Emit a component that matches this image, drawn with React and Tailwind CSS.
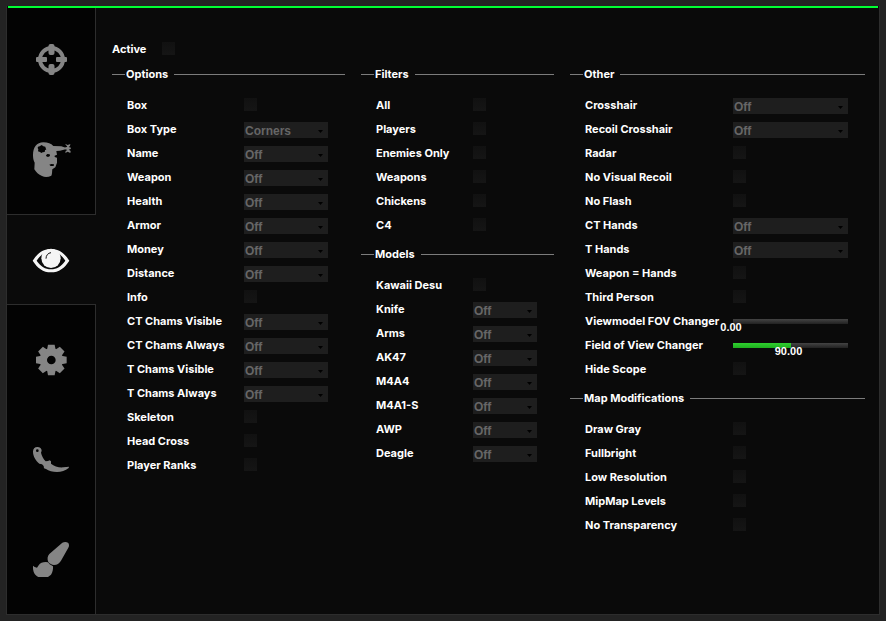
import React, { useState } from "react";

function Crosshair() {
  return (
    <svg className="size-12" viewBox="0 0 48 48" fill="currentColor" aria-hidden="true">
      <circle cx="24.5" cy="24.5" r="11.5" fill="none" stroke="currentColor" strokeWidth="4" />
      <rect x="21.5" y="9" width="6" height="11" rx="2" />
      <rect x="21.5" y="29" width="6" height="11" rx="2" />
      <rect x="9" y="22" width="11" height="5" rx="1" />
      <rect x="29" y="22" width="11" height="5" rx="1" />
    </svg>
  );
}

function Headshot() {
  return (
    <svg className="size-12" viewBox="21 15 144 144" fill="currentColor" aria-hidden="true">
      <path
        fillRule="evenodd"
        d="M39 75C39 52 50 37 70 37C84 37 93 41 100 48L124 49L137 53L137 58L120 62L109 63L111 74L104 77L104 81L111 83L111 98L106 112L97 118C96 124 97 132 94 137C84 142 74 142 66 138C56 134 48 127 43 118L44 98C40 90 39 84 39 75Z
        M54 50L59 49L65 45L70 49L76 50L77 55L79 58L75 61L74 66L68 67L64 69L60 66L54 64L55 58L53 54Z
        M78 76L82 72L89 73L90 78L84 81L79 79Z M88 104L94 102L102 103L101 108L92 108Z"
      />
      <path d="M135 41L143 45L151 42L150 48L146 51L153 53L152 57L146 59L152 63L151 69L143 65L136 69L137 63L142 60L134 57L134 53L142 50Z" />
    </svg>
  );
}

function Eye() {
  return (
    <svg className="size-12" viewBox="81 108 144 144" aria-hidden="true">
      <path
        fill="currentColor"
        fillRule="evenodd"
        d="M98 182C112 160 129 147 153 147C177 147 194 160 208 182C194 204 177 217 153 217C129 217 112 204 98 182Z
        M110 182C122 199 136 208 153 208C170 208 184 199 196 182C190 173 183 165 175 160L131 160C123 165 116 173 110 182Z"
      />
      <circle cx="153" cy="175" r="29" fill="currentColor" />
      <path d="M138 176C138 166 144 159 153 158" fill="none" stroke="#111" strokeWidth="3" />
    </svg>
  );
}

const TEETH = [0, 45, 90, 135, 180, 225, 270, 315];

function Gear() {
  return (
    <svg className="size-12" viewBox="81 408 144 144" fill="currentColor" aria-hidden="true">
      <circle cx="154" cy="480" r="24" fill="none" stroke="currentColor" strokeWidth="22" />
      {TEETH.map((angle) => (
        <path key={angle} d="M141 450L144 434L164 434L167 450Z" transform={`rotate(${angle} 154 480)`} />
      ))}
    </svg>
  );
}

function Knife() {
  return (
    <svg className="size-12" viewBox="81 48 144 144" fill="currentColor" aria-hidden="true">
      <path
        fillRule="evenodd"
        d="M99 95C99 86 104 81 112 81C120 81 125 86 125 92L123 98C125 107 130 117 137 124L144 123L149 121L153 124L153 131C162 139 176 143 190 142L207 140L206 144C196 152 184 156 171 156C158 156 146 153 138 147L132 145L131 138L126 133L118 131C107 122 99 108 99 95Z
        M108 92A4 4 0 1 0 116 92A4 4 0 1 0 108 92Z"
      />
    </svg>
  );
}

function Brush() {
  return (
    <svg className="size-12" viewBox="81 348 144 144" fill="currentColor" aria-hidden="true">
      <path d="M187 368C192 365 200 365 204 368C208 372 208 378 205 383L183 422C178 430 171 435 162 435C155 435 149 431 145 426C141 418 142 408 148 402Z" />
      <path d="M99 437L104 441L111 443L116 436C120 429 128 426 137 426L144 427L149 433L159 439C160 447 158 457 153 464L144 471L115 471C104 465 98 455 99 437Z" />
    </svg>
  );
}

function Tab({ label, children, active }) {
  return (
    <button
      type="button"
      aria-label={label}
      aria-pressed={!!active}
      className={
        active
          ? "flex h-[91px] w-full items-center justify-center border-y border-[#2d2d2d] bg-[#0a0a0a] pr-px text-[#f5f5f5]"
          : "flex h-[100px] w-full items-center justify-center text-[#858585]"
      }
    >
      {children}
    </button>
  );
}

function Check({ id }) {
  return (
    <input
      id={id}
      type="checkbox"
      className="block size-[13px] appearance-none bg-linear-to-b from-[#111111] to-[#151515] checked:from-[#2ccf2c] checked:to-[#1ea01e]"
    />
  );
}

function Choice({ id, value }) {
  return (
    <div className="relative h-4">
      <select
        id={id}
        defaultValue={value}
        className="block h-4 w-full appearance-none bg-[#1e1e1e] pt-[2px] pl-px font-['Liberation_Sans',Arial,sans-serif] text-xs leading-[14px] font-bold text-[#666666] outline-none"
      >
        <option>{value}</option>
      </select>
      <svg className="pointer-events-none absolute top-2 right-[5px] h-[3px] w-[5px]" viewBox="0 0 5 3" aria-hidden="true">
        <path d="M0 0H5L2.5 3Z" fill="#000" />
      </svg>
    </div>
  );
}

function Slider({ id, initial, max }) {
  const [value, setValue] = useState(initial);
  const fill = `${(value / max) * 100}%`;
  return (
    <div className="relative mt-[5px] h-[5px]">
      <input
        id={id}
        type="range"
        min="0"
        max={max}
        value={value}
        onChange={(event) => setValue(Number(event.target.value))}
        className="block h-[5px] w-full appearance-none bg-linear-to-b from-[#444444] to-[#222222] outline-none [&::-webkit-slider-thumb]:size-0 [&::-webkit-slider-thumb]:appearance-none"
      />
      <div
        className="pointer-events-none absolute top-0 left-0 h-[5px] bg-linear-to-b from-[#2fd02f] to-[#1fae1f]"
        style={{ width: fill }}
      />
      <output
        htmlFor={id}
        className="pointer-events-none absolute top-[2px] -ml-[2px] -translate-x-1/2 font-['Liberation_Sans',Arial,sans-serif] text-[11px] leading-3 font-bold text-white"
        style={{ left: fill }}
      >
        {value.toFixed(2)}
      </output>
    </div>
  );
}

function Section({ title, rows, labelWidth }) {
  return (
    <section className="pt-[11px]">
      <div className="flex h-3 items-center">
        <div className="h-px w-[13px] bg-[#7c7c7c]" />
        <h2 className="pr-[6px] pl-px text-[11px] leading-3 font-bold whitespace-nowrap">{title}</h2>
        <div className="h-px flex-1 bg-[#7c7c7c]" />
      </div>
      <div className="pt-[13px] pr-[17px] pl-[15px]">
        {rows.map(([label, kind, value, max]) => {
          const id = `${title}-${label}`.replace(/[^A-Za-z0-9]+/g, "-").toLowerCase();
          return (
            <div key={label} className="flex h-6 items-start pt-[5px]">
              <label htmlFor={id} className={`${labelWidth} shrink-0 pt-px text-[11px] leading-3 font-bold whitespace-nowrap`}>
                {label}
              </label>
              <div className="min-w-0 flex-1">
                {kind === "check" && <Check id={id} />}
                {kind === "select" && <Choice id={id} value={value} />}
                {kind === "slider" && <Slider id={id} initial={value} max={max} />}
              </div>
            </div>
          );
        })}
      </div>
    </section>
  );
}

const check = (label) => [label, "check"];
const select = (label, value = "Off") => [label, "select", value];

const OPTIONS = [
  check("Box"),
  select("Box Type", "Corners"),
  select("Name"),
  select("Weapon"),
  select("Health"),
  select("Armor"),
  select("Money"),
  select("Distance"),
  check("Info"),
  select("CT Chams Visible"),
  select("CT Chams Always"),
  select("T Chams Visible"),
  select("T Chams Always"),
  check("Skeleton"),
  check("Head Cross"),
  check("Player Ranks"),
];

const FILTERS = ["All", "Players", "Enemies Only", "Weapons", "Chickens", "C4"].map(check);

const MODELS = [
  check("Kawaii Desu"),
  select("Knife"),
  select("Arms"),
  select("AK47"),
  select("M4A4"),
  select("M4A1-S"),
  select("AWP"),
  select("Deagle"),
];

const OTHER = [
  select("Crosshair"),
  select("Recoil Crosshair"),
  check("Radar"),
  check("No Visual Recoil"),
  check("No Flash"),
  select("CT Hands"),
  select("T Hands"),
  check("Weapon = Hands"),
  check("Third Person"),
  ["Viewmodel FOV Changer", "slider", 0, 180],
  ["Field of View Changer", "slider", 90, 180],
  check("Hide Scope"),
];

const MAP = ["Draw Gray", "Fullbright", "Low Resolution", "MipMap Levels", "No Transparency"].map(check);

export default function App() {
  return (
    <div className="flex min-h-screen bg-[#232323] p-[6px] font-['Inter','Liberation_Sans',sans-serif] text-white">
      <div className="flex flex-1 flex-col border-x border-b border-[#2d2d2d] bg-[#0a0a0a]">
        <div className="mx-px h-[2px] bg-[#00ff33]" />
        <div className="flex flex-1">
          <nav className="flex w-[89px] shrink-0 flex-col" aria-label="Sections">
            <div className="border-r border-[#2d2d2d] bg-[#030303] pt-px pb-[5px]">
              <Tab label="Aimbot"><Crosshair /></Tab>
              <Tab label="Triggerbot"><Headshot /></Tab>
            </div>
            <Tab label="Visuals" active><Eye /></Tab>
            <div className="flex-1 border-r border-[#2d2d2d] bg-[#030303] pt-[5px]">
              <Tab label="Settings"><Gear /></Tab>
              <Tab label="Knives"><Knife /></Tab>
              <Tab label="Skins"><Brush /></Tab>
            </div>
          </nav>
          <main className="min-w-0 flex-1 pt-[34px] pr-[14px] pl-4">
            <div className="flex h-[15px] items-start">
              <label htmlFor="active" className="w-[50px] pt-px text-[11px] leading-3 font-bold">Active</label>
              <Check id="active" />
            </div>
            <div className="grid grid-cols-[233fr_193fr_295fr] gap-x-4">
              <Section title="Options" rows={OPTIONS} labelWidth="w-[117px]" />
              <div>
                <Section title="Filters" rows={FILTERS} labelWidth="w-[97px]" />
                <Section title="Models" rows={MODELS} labelWidth="w-[97px]" />
              </div>
              <div>
                <Section title="Other" rows={OTHER} labelWidth="w-[148px]" />
                <Section title="Map Modifications" rows={MAP} labelWidth="w-[148px]" />
              </div>
            </div>
          </main>
        </div>
      </div>
    </div>
  );
}
